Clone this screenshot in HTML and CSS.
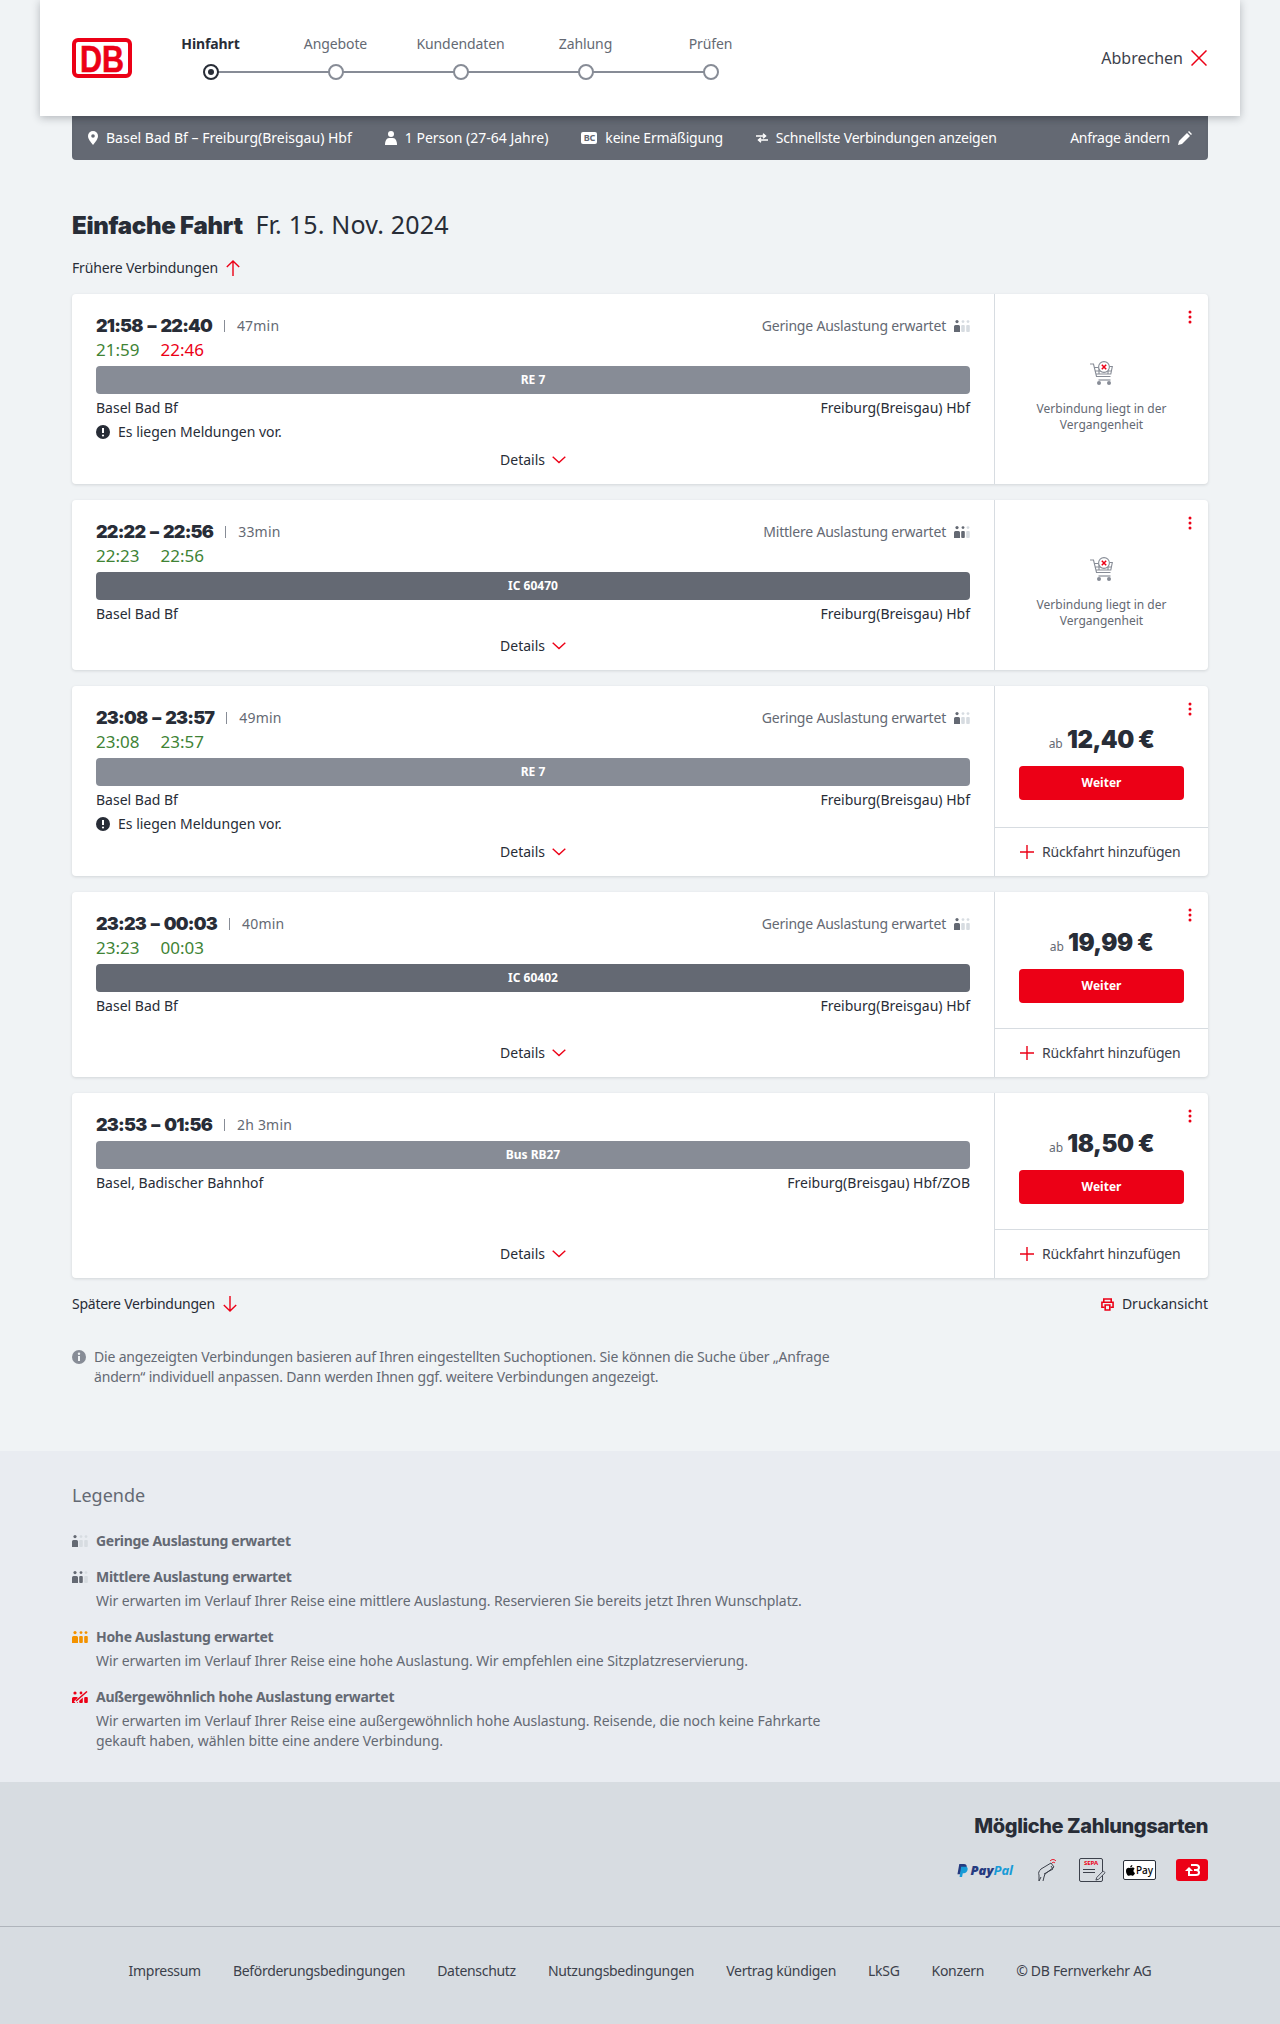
FILE: index.html
```html
<!DOCTYPE html>
<html lang="de">
<head>
  <meta charset="UTF-8" />
  <meta name="viewport" content="width=device-width, initial-scale=1.0"/>
  <title>Angebotsauswahl</title>
  <link rel="stylesheet" href="styles.css">
</head>
<body>
  <svg class="sprite" width="0" height="0">
    <symbol id="occ-low" viewBox="0 0 16 12">
      <circle cx="3" cy="1.6" r="1.6" fill="#646973"/><path d="M0 6.5a1.5 1.5 0 0 1 1.5-1.5h3A1.5 1.5 0 0 1 6 6.5V12H0z" fill="#646973"/>
      <circle cx="9" cy="1.6" r="1.4" fill="#d7dce1"/><rect x="7.2" y="5" width="3.6" height="7" rx="1" fill="#d7dce1"/>
      <circle cx="14" cy="1.6" r="1.4" fill="#d7dce1"/><rect x="12.2" y="5" width="3.6" height="7" rx="1" fill="#d7dce1"/>
    </symbol>
    <symbol id="occ-mid" viewBox="0 0 16 12">
      <circle cx="3" cy="1.6" r="1.6" fill="#646973"/><path d="M0 6.5a1.5 1.5 0 0 1 1.5-1.5h3A1.5 1.5 0 0 1 6 6.5V12H0z" fill="#646973"/>
      <circle cx="9" cy="1.6" r="1.4" fill="#646973"/><rect x="7.2" y="5" width="3.6" height="7" rx="1" fill="#646973"/>
      <circle cx="14" cy="1.6" r="1.4" fill="#d7dce1"/><rect x="12.2" y="5" width="3.6" height="7" rx="1" fill="#d7dce1"/>
    </symbol>
    <symbol id="occ-high" viewBox="0 0 16 12">
      <circle cx="3" cy="1.6" r="1.6" fill="#f39200"/><path d="M0 6.5a1.5 1.5 0 0 1 1.5-1.5h3A1.5 1.5 0 0 1 6 6.5V12H0z" fill="#f39200"/>
      <circle cx="9" cy="1.6" r="1.4" fill="#f39200"/><rect x="7.2" y="5" width="3.6" height="7" rx="1" fill="#f39200"/>
      <circle cx="14" cy="1.6" r="1.4" fill="#f39200"/><rect x="12.2" y="5" width="3.6" height="7" rx="1" fill="#f39200"/>
    </symbol>
    <symbol id="occ-max" viewBox="0 0 16 12">
      <circle cx="3" cy="2" r="1.6" fill="#ec0016"/><path d="M0 7.5A1.5 1.5 0 0 1 1.5 6h3A1.5 1.5 0 0 1 6 7.5V12H0z" fill="#ec0016"/>
      <circle cx="9" cy="2" r="1.4" fill="#ec0016"/><rect x="7.2" y="6" width="3.6" height="6" rx="1" fill="#ec0016"/>
      <rect x="12.2" y="6" width="3.6" height="6" rx="1" fill="#ec0016"/>
      <path d="M3 11.5 15.5 .5" stroke="#e9ecf1" stroke-width="3"/><path d="M4 10 15 .5" stroke="#ec0016" stroke-width="1.5"/>
    </symbol>
    <symbol id="chevron" viewBox="0 0 14 8">
      <path d="M.7.8 7 6.6 13.3.8" fill="none" stroke="#ec0016" stroke-width="1.4"/>
    </symbol>
    <symbol id="cart" viewBox="0 0 26 26">
      <g fill="none" stroke="#878c96" stroke-width="1.1">
        <path d="M1 3h3.5l3 12.5h14M5.300 6.500l4 0M6 10h16M6.800 13h15l1.500-7.500h-3"/>
        <path d="M10 6.500v6.500M19 9v4"/>
        <circle cx="15" cy="6" r="5.400" fill="#fff"/>
      </g>
      <circle cx="10" cy="22" r="2" fill="#878c96"/><circle cx="20" cy="22" r="2" fill="#878c96"/>
      <path d="M9.500 19h12" stroke="#878c96" stroke-width="1.200"/>
      <path d="M12.800 3.800l4.400 4.400M17.200 3.800l-4.400 4.400" stroke="#ec0016" stroke-width="1.500"/>
    </symbol>
    <symbol id="dots" viewBox="0 0 4 14">
      <circle cx="2" cy="2" r="1.500" fill="#ec0016"/><circle cx="2" cy="7" r="1.500" fill="#ec0016"/><circle cx="2" cy="12" r="1.500" fill="#ec0016"/>
    </symbol>
    <symbol id="plus" viewBox="0 0 14 14">
      <path d="M7 0v14M0 7h14" stroke="#ec0016" stroke-width="1.400"/>
    </symbol>
    <symbol id="notice" viewBox="0 0 14 14">
      <circle cx="7" cy="7" r="7" fill="#282d37"/>
      <path d="M7 3v5" stroke="#fff" stroke-width="2"/><circle cx="7" cy="10.500" r="1.100" fill="#fff"/>
    </symbol>
  </svg>

  <header class="topbar">
    <svg class="logo" viewBox="0 0 60 40" width="60" height="40">
      <rect x="2" y="2" width="56" height="36" rx="4" fill="#fff" stroke="#ec0016" stroke-width="4"/>
      <text x="30" y="33.500" text-anchor="middle" class="logo-text" textLength="44" lengthAdjust="spacingAndGlyphs">DB</text>
    </svg>
    <ol class="stepper">
      <li class="step step-active"><span>Hinfahrt</span><i></i></li>
      <li class="step"><span>Angebote</span><i></i></li>
      <li class="step"><span>Kundendaten</span><i></i></li>
      <li class="step"><span>Zahlung</span><i></i></li>
      <li class="step"><span>Prüfen</span><i></i></li>
    </ol>
    <div class="cancel">
      Abbrechen
      <svg viewBox="0 0 16 16" width="16" height="16"><path d="M.5.500l15 15M15.500.500l-15 15" stroke="#ec0016" stroke-width="1.500"/></svg>
    </div>
  </header>

  <main class="wrap">
    <div class="summary">
      <div class="summary-item">
        <svg viewBox="0 0 10 14" width="10" height="14"><path d="M5 0a5 5 0 0 1 5 5c0 3.500-5 9-5 9S0 8.500 0 5a5 5 0 0 1 5-5z" fill="#fff"/><circle cx="5" cy="5" r="1.800" fill="#646973"/></svg>
        Basel Bad Bf – Freiburg(Breisgau) Hbf
      </div>
      <div class="summary-item">
        <svg viewBox="0 0 12 14" width="12" height="14"><circle cx="6" cy="3" r="3" fill="#fff"/><path d="M0 14c0-4 1.500-7 4-7h4c2.500 0 4 3 4 7z" fill="#fff"/></svg>
        1 Person (27-64 Jahre)
      </div>
      <div class="summary-item summary-tight">
        <span class="bc">BC</span>
        keine Ermäßigung
      </div>
      <div class="summary-item summary-tight">
        <svg viewBox="0 0 12 10" width="12" height="10"><path d="M0 3h9M7 .8 9.500 3 7 5.200M12 7H3M5 4.800 2.500 7 5 9.200" fill="none" stroke="#fff" stroke-width="1.500"/></svg>
        Schnellste Verbindungen anzeigen
      </div>
      <div class="summary-edit">
        Anfrage ändern
        <svg viewBox="0 0 14 14" width="14" height="14"><path d="M0 14l1-4 8-8 3 3-8 8zM10 1l1-1 3 3-1 1z" fill="#fff"/></svg>
      </div>
    </div>

    <h1 class="title"><b>Einfache Fahrt</b> Fr. 15. Nov. 2024</h1>

    <div class="page-link page-link-top">
      Frühere Verbindungen
      <svg viewBox="0 0 14 16" width="14" height="16"><path d="M7 16V1M.8 7 7 1l6.200 6" fill="none" stroke="#ec0016" stroke-width="1.400"/></svg>
    </div>

    <article class="card">
      <div class="card-main">
        <div class="time-row">
          <div class="times">21:58 – 22:40</div><div class="duration">47min</div>
          <div class="occ">Geringe Auslastung erwartet <svg width="16" height="12"><use href="#occ-low"/></svg></div>
        </div>
        <div class="real"><span class="on-time">21:59</span><span class="late">22:46</span></div>
        <div class="train train-re">RE 7</div>
        <div class="stations"><span>Basel Bad Bf</span><span>Freiburg(Breisgau) Hbf</span></div>
        <div class="message"><svg width="14" height="14"><use href="#notice"/></svg>Es liegen Meldungen vor.</div>
        <div class="details">Details <svg width="14" height="8"><use href="#chevron"/></svg></div>
      </div>
      <aside class="card-side card-past">
        <svg class="menu" width="4" height="14"><use href="#dots"/></svg>
        <svg width="26" height="26"><use href="#cart"/></svg>
        <p>Verbindung liegt in der Vergangenheit</p>
      </aside>
    </article>

    <article class="card">
      <div class="card-main">
        <div class="time-row">
          <div class="times">22:22 – 22:56</div><div class="duration">33min</div>
          <div class="occ">Mittlere Auslastung erwartet <svg width="16" height="12"><use href="#occ-mid"/></svg></div>
        </div>
        <div class="real"><span class="on-time">22:23</span><span class="on-time">22:56</span></div>
        <div class="train train-ic">IC 60470</div>
        <div class="stations"><span>Basel Bad Bf</span><span>Freiburg(Breisgau) Hbf</span></div>
        <div class="details">Details <svg width="14" height="8"><use href="#chevron"/></svg></div>
      </div>
      <aside class="card-side card-past">
        <svg class="menu" width="4" height="14"><use href="#dots"/></svg>
        <svg width="26" height="26"><use href="#cart"/></svg>
        <p>Verbindung liegt in der Vergangenheit</p>
      </aside>
    </article>

    <article class="card">
      <div class="card-main">
        <div class="time-row">
          <div class="times">23:08 – 23:57</div><div class="duration">49min</div>
          <div class="occ">Geringe Auslastung erwartet <svg width="16" height="12"><use href="#occ-low"/></svg></div>
        </div>
        <div class="real"><span class="on-time">23:08</span><span class="on-time">23:57</span></div>
        <div class="train train-re">RE 7</div>
        <div class="stations"><span>Basel Bad Bf</span><span>Freiburg(Breisgau) Hbf</span></div>
        <div class="message"><svg width="14" height="14"><use href="#notice"/></svg>Es liegen Meldungen vor.</div>
        <div class="details">Details <svg width="14" height="8"><use href="#chevron"/></svg></div>
      </div>
      <aside class="card-side">
        <div class="offer">
          <svg class="menu" width="4" height="14"><use href="#dots"/></svg>
          <div class="price"><small>ab</small> 12,40 €</div>
          <div class="btn">Weiter</div>
        </div>
        <div class="return"><svg width="14" height="14"><use href="#plus"/></svg>Rückfahrt hinzufügen</div>
      </aside>
    </article>

    <article class="card">
      <div class="card-main">
        <div class="time-row">
          <div class="times">23:23 – 00:03</div><div class="duration">40min</div>
          <div class="occ">Geringe Auslastung erwartet <svg width="16" height="12"><use href="#occ-low"/></svg></div>
        </div>
        <div class="real"><span class="on-time">23:23</span><span class="on-time">00:03</span></div>
        <div class="train train-ic">IC 60402</div>
        <div class="stations"><span>Basel Bad Bf</span><span>Freiburg(Breisgau) Hbf</span></div>
        <div class="details">Details <svg width="14" height="8"><use href="#chevron"/></svg></div>
      </div>
      <aside class="card-side">
        <div class="offer">
          <svg class="menu" width="4" height="14"><use href="#dots"/></svg>
          <div class="price"><small>ab</small> 19,99 €</div>
          <div class="btn">Weiter</div>
        </div>
        <div class="return"><svg width="14" height="14"><use href="#plus"/></svg>Rückfahrt hinzufügen</div>
      </aside>
    </article>

    <article class="card">
      <div class="card-main">
        <div class="time-row">
          <div class="times">23:53 – 01:56</div><div class="duration">2h 3min</div>
        </div>
        <div class="train train-re">Bus RB27</div>
        <div class="stations"><span>Basel, Badischer Bahnhof</span><span>Freiburg(Breisgau) Hbf/ZOB</span></div>
        <div class="details">Details <svg width="14" height="8"><use href="#chevron"/></svg></div>
      </div>
      <aside class="card-side">
        <div class="offer">
          <svg class="menu" width="4" height="14"><use href="#dots"/></svg>
          <div class="price"><small>ab</small> 18,50 €</div>
          <div class="btn">Weiter</div>
        </div>
        <div class="return"><svg width="14" height="14"><use href="#plus"/></svg>Rückfahrt hinzufügen</div>
      </aside>
    </article>

    <div class="after-list">
      <div class="page-link page-link-later">
        Spätere Verbindungen
        <svg viewBox="0 0 14 16" width="14" height="16"><path d="M7 0v15M.8 9 7 15l6.200-6" fill="none" stroke="#ec0016" stroke-width="1.400"/></svg>
      </div>
      <div class="print">
        <svg viewBox="0 0 14 14" width="13" height="13"><path d="M3 4V1h8v3M3.500 10H1V4.500h12V10h-2.500M4.500 7.500h5V13h-5z" fill="none" stroke="#ec0016" stroke-width="1.700"/></svg>
        Druckansicht
      </div>
    </div>

    <div class="hint">
      <svg viewBox="0 0 14 14" width="14" height="14"><circle cx="7" cy="7" r="7" fill="#878c96"/><path d="M7 6v5" stroke="#f0f3f5" stroke-width="2"/><circle cx="7" cy="3.700" r="1.200" fill="#f0f3f5"/></svg>
      <p>Die angezeigten Verbindungen basieren auf Ihren eingestellten Suchoptionen. Sie können die Suche über „Anfrage ändern“ individuell anpassen. Dann werden Ihnen ggf. weitere Verbindungen angezeigt.</p>
    </div>
  </main>

  <section class="legend">
    <div class="wrap">
      <h2>Legende</h2>
      <div class="legend-item">
        <svg width="16" height="12"><use href="#occ-low"/></svg>
        <div><h3>Geringe Auslastung erwartet</h3></div>
      </div>
      <div class="legend-item">
        <svg width="16" height="12"><use href="#occ-mid"/></svg>
        <div><h3>Mittlere Auslastung erwartet</h3><p>Wir erwarten im Verlauf Ihrer Reise eine mittlere Auslastung. Reservieren Sie bereits jetzt Ihren Wunschplatz.</p></div>
      </div>
      <div class="legend-item">
        <svg width="16" height="12"><use href="#occ-high"/></svg>
        <div><h3>Hohe Auslastung erwartet</h3><p>Wir erwarten im Verlauf Ihrer Reise eine hohe Auslastung. Wir empfehlen eine Sitzplatzreservierung.</p></div>
      </div>
      <div class="legend-item">
        <svg width="16" height="12"><use href="#occ-max"/></svg>
        <div><h3>Außergewöhnlich hohe Auslastung erwartet</h3><p>Wir erwarten im Verlauf Ihrer Reise eine außergewöhnlich hohe Auslastung. Reisende, die noch keine Fahrkarte gekauft haben, wählen bitte eine andere Verbindung.</p></div>
      </div>
    </div>
  </section>

  <section class="payment">
    <div class="wrap">
      <h2>Mögliche Zahlungsarten</h2>
      <div class="pay-icons">
        <div class="paypal">
          <svg viewBox="0 0 12 14" width="11" height="13"><path d="M2.500 0h5c2.500 0 3.500 1.500 3 3.500S8.500 7 6.500 7H4.500l-.8 4H.5z" fill="#253b80"/><path d="M4.500 3h5c2 0 2.500 1.500 2 3.500S9.500 10 7.500 10H6.300l-.8 4H2.800z" fill="#179bd7"/></svg>
          <span><b>Pay</b><i>Pal</i></span>
        </div>
        <svg viewBox="0 0 24 24" width="24" height="24"><g fill="none" stroke="#3c414b" stroke-width="1"><path d="M4 23v-6c-1-2 0-4 2-6l10-6 3 4-9 7-1 3-1 4M16 8l2 3-9 5"/><path d="M6 19 4 23"/></g><path d="M15 3c2-2 4-2 6 0M17 5c1-1 2-1 3 0" fill="none" stroke="#ec0016" stroke-width="1"/></svg>
        <div class="sepa"><span>SEPA</span><i></i><i></i><svg viewBox="0 0 12 12" width="11" height="11"><path d="M1 11l1-3 7-7 2 2-7 7z" fill="#d7dce1" stroke="#3c414b"/></svg></div>
        <div class="applepay"><svg viewBox="0 0 10 12" width="9" height="11"><path d="M7 0c.2 1.400-1 2.800-2.300 2.700C4.500 1.500 5.700.100 7 0zM5 3.300c.6 0 1.300-.5 2.300-.5.900 0 1.800.5 2.300 1.300-2 1.200-1.600 4 .4 4.800-.5 1.300-1.500 3-2.700 3-.8 0-1.100-.5-2-.5s-1.300.5-2 .5C1.800 12.100 0 9 0 6.500c0-2.300 1.500-3.600 2.900-3.600.9 0 1.600.4 2.100.4z" fill="#000"/></svg>Pay</div>
        <div class="bonus"><svg viewBox="0 0 18 14" width="18" height="14"><path d="M8 2h5c2 0 3 1 3 2.500S15 7 13 7h-2m2 0c2 0 3 1 3 2.500S15 12 13 12H6V8" fill="none" stroke="#fff" stroke-width="2"/><path d="M2 8l4-4 4 4z" fill="#fff"/></svg></div>
      </div>
    </div>
  </section>

  <footer class="footer">
    <a>Impressum</a>
    <a>Beförderungsbedingungen</a>
    <a>Datenschutz</a>
    <a>Nutzungsbedingungen</a>
    <a>Vertrag kündigen</a>
    <a>LkSG</a>
    <a>Konzern</a>
    <a>© DB Fernverkehr AG</a>
  </footer>
</body>
</html>
```

FILE: styles.css
```css
body {
  font-family: "Noto Sans", Arial, sans-serif;
  font-size: 14px;
  line-height: 20px;
  background-color: #f0f3f5;
  color: #282d37;
  margin: 0;
}

h1, h2, h3, p, ol {
  margin: 0;
  padding: 0;
}

.sprite {
  position: absolute;
}

.wrap {
  width: 1136px;
  margin: 0 auto;
}

/* top bar */
.topbar {
  position: relative;
  z-index: 2;
  display: flex;
  align-items: center;
  box-sizing: border-box;
  width: 1200px;
  height: 116px;
  margin: 0 auto;
  padding: 0 33px 0 32px;
  background-color: #fff;
  box-shadow: 0 2px 8px rgba(40, 45, 55, 0.3);
}

.logo {
  flex: none;
  margin-right: 16px;
}

.logo-text {
  font-family: "Liberation Sans", Arial, sans-serif;
  font-size: 37px;
  font-weight: bold;
  fill: #ec0016;
  stroke: #ec0016;
  stroke-width: 0.6px;
}

.stepper {
  display: flex;
  list-style: none;
  margin-bottom: 2px;
}

.step {
  position: relative;
  display: flex;
  flex-direction: column;
  align-items: center;
  width: 125px;
  color: #646973;
  font-size: 14px;
  letter-spacing: -0.1px;
}

.step span {
  height: 20px;
  margin-bottom: 10px;
}

.step i {
  position: relative;
  z-index: 1;
  box-sizing: border-box;
  width: 16px;
  height: 16px;
  border: 2px solid #878c96;
  border-radius: 50%;
  background-color: #fff;
}

.step::before {
  content: "";
  position: absolute;
  left: 50%;
  bottom: 7px;
  width: 125px;
  height: 2px;
  background-color: #878c96;
}

.step:last-child::before {
  display: none;
}

.step-active {
  color: #282d37;
  font-weight: 700;
}

.step-active i {
  border-color: #282d37;
}

.step-active i::after {
  content: "";
  position: absolute;
  top: 3px;
  left: 3px;
  width: 6px;
  height: 6px;
  border-radius: 50%;
  background-color: #282d37;
}

.cancel {
  display: flex;
  align-items: center;
  gap: 8px;
  margin-left: auto;
  font-size: 16px;
  color: #3c414b;
}

/* search summary */
.summary {
  display: flex;
  align-items: center;
  height: 44px;
  padding: 0 16px;
  background-color: #646973;
  border-radius: 0 0 4px 4px;
  color: #fff;
  box-shadow: inset 0 6px 6px -4px rgba(40, 45, 55, 0.3);
}

.summary-item {
  display: flex;
  align-items: center;
  gap: 8px;
  margin-right: 33px;
}

.summary-tight {
  letter-spacing: -0.2px;
}

.summary-edit {
  display: flex;
  align-items: center;
  gap: 8px;
  margin-left: auto;
  letter-spacing: -0.25px;
}

.bc {
  width: 16px;
  height: 12px;
  border-radius: 2px;
  background-color: #fff;
  color: #646973;
  font-size: 9px;
  font-weight: 700;
  line-height: 12px;
  text-align: center;
}

.title {
  margin-top: 48px;
  font-size: 25px;
  font-weight: 400;
  line-height: 32px;
  letter-spacing: 0.2px;
  color: #282d37;
}

.title b {
  font-family: Inter, sans-serif;
  font-size: 24px;
  font-weight: 900;
  letter-spacing: -0.3px;
  margin-right: 6px;
}

.page-link {
  display: flex;
  align-items: center;
  gap: 8px;
  letter-spacing: -0.15px;
}

.page-link-top {
  margin: 16px 0;
}

.page-link-later {
  letter-spacing: -0.25px;
}

/* connection cards */
.card {
  display: flex;
  margin-bottom: 16px;
  background-color: #fff;
  border-radius: 4px;
  box-shadow: 0 1px 3px rgba(40, 45, 55, 0.15);
}

.card-main {
  display: flex;
  flex-direction: column;
  box-sizing: border-box;
  width: 922px;
  min-height: 170px;
  padding: 20px 24px 14px;
}

.card-side {
  position: relative;
  display: flex;
  flex-direction: column;
  box-sizing: border-box;
  width: 214px;
  min-height: 185px;
  border-left: 1px solid #d7dce1;
}

.card-past {
  align-items: center;
  justify-content: center;
  min-height: 0;
  padding: 15px 24px 0;
}

.card-past p {
  margin-top: 14px;
  font-size: 12px;
  line-height: 16px;
  color: #646973;
  text-align: center;
}

.menu {
  position: absolute;
  top: 16px;
  right: 16px;
}

.time-row {
  display: flex;
  align-items: center;
  height: 24px;
}

.times {
  font-family: Inter, sans-serif;
  font-size: 18px;
  font-weight: 900;
  letter-spacing: -0.8px;
  word-spacing: 2px;
}

.duration {
  margin-left: 12px;
  padding-left: 12px;
  color: #646973;
  line-height: 12px;
  border-left: 1px solid #878c96;
  letter-spacing: 0.2px;
}

.occ {
  display: flex;
  align-items: center;
  gap: 8px;
  margin-left: auto;
  color: #646973;
  letter-spacing: -0.2px;
}

.real {
  display: flex;
  gap: 21px;
  height: 24px;
  font-size: 17px;
  line-height: 24px;
}

.on-time {
  color: #408335;
}

.late {
  color: #ec0016;
}

.train {
  height: 28px;
  margin-top: 4px;
  border-radius: 4px;
  color: #fff;
  font-size: 12px;
  font-weight: 700;
  line-height: 28px;
  text-align: center;
}

.train-re {
  background-color: #878c96;
}

.train-ic {
  background-color: #646973;
}

.stations {
  display: flex;
  justify-content: space-between;
  margin-top: 4px;
}

.message {
  display: flex;
  align-items: center;
  gap: 8px;
  margin-top: 4px;
}

.details {
  display: flex;
  align-items: center;
  justify-content: center;
  gap: 7px;
  margin-top: auto;
  padding-top: 8px;
}

.offer {
  flex: 1;
  display: flex;
  flex-direction: column;
  align-items: center;
  justify-content: center;
  padding: 10px 24px 0;
}

.price {
  font-family: Inter, sans-serif;
  font-size: 24px;
  font-weight: 900;
  letter-spacing: -0.5px;
  line-height: 32px;
}

.price small {
  font-family: "Noto Sans", sans-serif;
  font-size: 12px;
  font-weight: 400;
  color: #646973;
  letter-spacing: 0;
}

.btn {
  width: 165px;
  height: 34px;
  margin-top: 6px;
  border-radius: 4px;
  background-color: #ec0016;
  color: #fff;
  font-size: 12px;
  font-weight: 700;
  line-height: 34px;
  text-align: center;
}

.return {
  display: flex;
  align-items: center;
  gap: 8px;
  height: 48px;
  padding-left: 25px;
  border-top: 1px solid #d7dce1;
  color: #3c414b;
  letter-spacing: -0.18px;
}

.after-list {
  display: flex;
  justify-content: space-between;
  margin-top: 4px;
}

.print {
  display: flex;
  align-items: center;
  gap: 8px;
}

.hint {
  display: flex;
  gap: 8px;
  width: 780px;
  margin-top: 33px;
  padding-bottom: 64px;
  color: #646973;
  letter-spacing: -0.18px;
}

.hint svg {
  flex: none;
  margin-top: 3px;
}

/* legend */
.legend {
  height: 331px;
  box-sizing: border-box;
  padding-top: 32px;
  background-color: #e9ecf1;
  color: #646973;
}

.legend h2 {
  margin-bottom: 24px;
  font-size: 18px;
  font-weight: 400;
  line-height: 24px;
}

.legend-item {
  display: flex;
  gap: 8px;
  width: 780px;
  margin-bottom: 16px;
}

.legend-item > svg {
  flex: none;
  margin-top: 4px;
}

.legend-item h3 {
  font-size: 14px;
  font-weight: 700;
  letter-spacing: -0.3px;
}

.legend-item p {
  margin-top: 4px;
  letter-spacing: -0.08px;
}

/* payment + footer */
.payment {
  height: 144px;
  box-sizing: border-box;
  padding-top: 30px;
  background-color: #d7dce1;
  text-align: right;
}

.payment h2 {
  font-family: Inter, sans-serif;
  font-size: 20px;
  font-weight: 800;
  letter-spacing: -0.4px;
  line-height: 28px;
}

.pay-icons {
  display: flex;
  justify-content: flex-end;
  align-items: center;
  gap: 20px;
  margin-top: 18px;
}

.paypal {
  display: flex;
  align-items: center;
  gap: 2px;
  margin-right: 2px;
  font-size: 13px;
  font-style: italic;
  font-weight: 700;
  color: #253b80;
}

.paypal i {
  color: #179bd7;
}

.sepa {
  position: relative;
  width: 22px;
  height: 22px;
  border: 1px solid #3c414b;
  border-radius: 2px;
  text-align: left;
}

.sepa span {
  display: block;
  font-size: 6px;
  font-weight: 700;
  line-height: 8px;
  color: #ec0016;
  text-align: center;
}

.sepa i {
  display: block;
  width: 12px;
  height: 1px;
  margin: 2px 0 0 3px;
  background-color: #3c414b;
}

.sepa svg {
  position: absolute;
  right: -4px;
  bottom: 0;
}

.applepay {
  display: flex;
  align-items: center;
  justify-content: center;
  gap: 1px;
  box-sizing: border-box;
  width: 33px;
  height: 20px;
  border: 1px solid #282d37;
  border-radius: 2px;
  background-color: #fff;
  color: #000;
  font-size: 10px;
  font-weight: 500;
}

.bonus {
  display: flex;
  align-items: center;
  justify-content: center;
  width: 32px;
  height: 22px;
  border-radius: 3px;
  background-color: #ec0016;
}

.footer {
  display: flex;
  justify-content: center;
  align-items: center;
  gap: 32px;
  height: 98px;
  box-sizing: border-box;
  padding-bottom: 9px;
  border-top: 1px solid #afb4bb;
  background-color: #d7dce1;
  color: #3c414b;
  letter-spacing: -0.3px;
}
```
